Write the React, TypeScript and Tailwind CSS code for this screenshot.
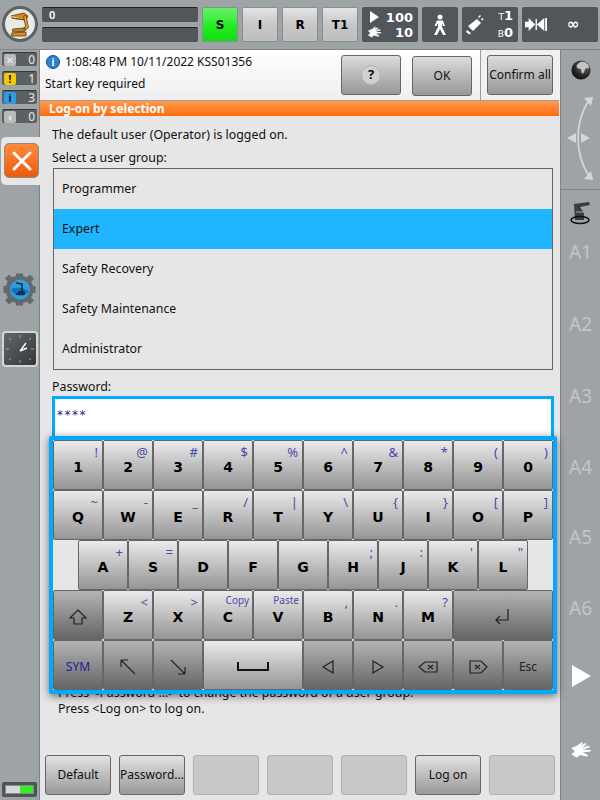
import React from "react";

const font = { fontFamily: '"Noto Sans", "DejaVu Sans", sans-serif' };
const dejavu = { fontFamily: '"DejaVu Sans", sans-serif' };

function RobotIcon() {
  return (
    <svg width="24" height="26" viewBox="0 0 24 26" fill="none" strokeLinecap="round" strokeLinejoin="round">
      <path d="M3 5 L16 2 L20 5 L18 9 M17 9 L10 8 L4 7 Z" fill="#d68a1e" stroke="#5a3c10" strokeWidth="0.8" />
      <path d="M17 6 L19 16 L15 19" stroke="#5a3c10" strokeWidth="3.4" />
      <path d="M17 6 L19 16 L15 19" stroke="#e09a28" strokeWidth="2" />
      <path d="M5 18 L17 17 L17 20 L5 21 Z" fill="#c47f1a" stroke="#5a3c10" strokeWidth="0.8" />
      <path d="M4 22 L18 21 L18 25 L4 25 Z" fill="#d98f22" stroke="#5a3c10" strokeWidth="0.8" />
    </svg>
  );
}

function ModeKey({ label, active }: { label: string; active?: boolean }) {
  return (
    <div
      className={
        "w-[36px] h-[35px] flex items-center justify-center text-[12px] font-bold text-black border border-[#8a8e90] " +
        (active
          ? "bg-gradient-to-b from-[#66f066] via-[#22ee22] to-[#11e011]"
          : "bg-gradient-to-b from-[#e4e4e4] via-[#c8c8c8] to-[#bdbdbd]")
      }
      style={dejavu}
    >
      {label}
    </div>
  );
}

function DarkBox({ className, children }: { className: string; children: React.ReactNode }) {
  return (
    <div className={"h-[35px] bg-[#50565a] rounded-[2px] text-white flex items-center " + className}>{children}</div>
  );
}

function HandIcon({ size = 18, fill = "white" }: { size?: number; fill?: string }) {
  return (
    <svg width={size} height={size * 0.8} viewBox="0 0 24 20" fill={fill}>
      <path d="M1 8 L8 5 L13 1 L14 3 L11 6 L17 2 L18 4 L13 8 L21 5 L22 7 L14 10 L23 10 L23 12 L14 13 L20 16 L19 18 L11 16 L7 19 L1 15 L5 12 Z" />
    </svg>
  );
}

function StatusRow({ n, bg, glyph }: { n: number; bg: string; glyph: string }) {
  return (
    <div className="w-[35px] h-[14px] mb-[5px] ml-[2px] bg-[#5a6064] border-t border-[#33383b] rounded-[2px] flex items-center justify-between pr-[2px] pl-[2px]">
      <div className={"w-[12px] h-[12px] rounded-[2px] flex items-center justify-center text-[10px] font-bold leading-none " + bg}>
        {glyph}
      </div>
      <span className="text-[12px] font-medium text-[#dcdcdc] leading-none" style={font}>
        {n}
      </span>
    </div>
  );
}

function Key({
  label,
  sub,
  dark,
  wide,
  subSmall,
  children,
}: {
  label?: string;
  sub?: string;
  dark?: boolean;
  wide?: boolean;
  subSmall?: boolean;
  children?: React.ReactNode;
}) {
  return (
    <div
      className={
        "relative h-[50px] flex items-center justify-center border-[1.5px] border-[#666] rounded-[2px] pt-[3px] " +
        (wide ? "w-[100px] " : "w-[50px] ") +
        (dark
          ? "bg-gradient-to-b from-[#b4b4b4] to-[#666666]"
          : "bg-gradient-to-b from-[#ebebeb] to-[#959595]")
      }
    >
      {label && (
        <span className="text-[14px] font-bold text-black leading-none" style={dejavu}>
          {label}
        </span>
      )}
      {children}
      {sub && (
        <span
          className={
            "absolute text-[#4a4aaa] leading-none " +
            (subSmall ? "right-[3px] top-[4px] text-[10px]" : "right-[4px] top-[5px] text-[13px]")
          }
          style={font}
        >
          {sub}
        </span>
      )}
    </div>
  );
}

function I({ children }: { children: React.ReactNode }) {
  return (
    <svg width="20" height="20" viewBox="0 0 20 20" fill="none" stroke="#222" strokeWidth="1.2">
      {children}
    </svg>
  );
}

const row1: [string, string][] = [["1", "!"], ["2", "@"], ["3", "#"], ["4", "$"], ["5", "%"], ["6", "^"], ["7", "&"], ["8", "*"], ["9", "("], ["0", ")"]];
const row2: [string, string][] = [["Q", "~"], ["W", "-"], ["E", "_"], ["R", "/"], ["T", "|"], ["Y", "\\"], ["U", "{"], ["I", "}"], ["O", "["], ["P", "]"]];
const row3: [string, string][] = [["A", "+"], ["S", "="], ["D", ""], ["F", ""], ["G", ""], ["H", ";"], ["J", ":"], ["K", "'"], ["L", '"']];

function Keyboard() {
  return (
    <div className="absolute left-[49px] top-[436px] w-[508px] h-[258px] bg-[#e6e6e6] border-4 border-[#00aaff] rounded-[2px] shadow-[0_2px_8px_rgba(0,0,0,0.55)] flex flex-col items-center">
      <div className="flex">{row1.map(([l, s]) => <Key key={l} label={l} sub={s} />)}</div>
      <div className="flex">{row2.map(([l, s]) => <Key key={l} label={l} sub={s} />)}</div>
      <div className="flex">{row3.map(([l, s]) => <Key key={l} label={l} sub={s} />)}</div>
      <div className="flex">
        <Key dark>
          <I><path d="M10 3 L18 11 L14 11 L14 17 L6 17 L6 11 L2 11 Z" /></I>
        </Key>
        <Key label="Z" sub="<" />
        <Key label="X" sub=">" />
        <Key label="C" sub="Copy" subSmall />
        <Key label="V" sub="Paste" subSmall />
        <Key label="B" sub="," />
        <Key label="N" sub="." />
        <Key label="M" sub="?" />
        <Key dark wide>
          <I><path d="M15 2 L15 13 L3 13 M7 9 L3 13 L7 17" /></I>
        </Key>
      </div>
      <div className="flex">
        <Key dark>
          <span className="text-[12px] text-[#22229a] leading-none" style={font}>SYM</span>
        </Key>
        <Key dark><I><path d="M3 3 L17 17 M3 3 L3 10 M3 3 L10 3" /></I></Key>
        <Key dark><I><path d="M3 3 L17 17 M17 17 L17 10 M17 17 L10 17" /></I></Key>
        <Key wide>
          <svg width="32" height="10" viewBox="0 0 32 10" fill="none" stroke="#111" strokeWidth="2"><path d="M1 0 L1 8 L31 8 L31 0" /></svg>
        </Key>
        <Key dark><I><path d="M15 4 L5 10 L15 16 Z" /></I></Key>
        <Key dark><I><path d="M5 4 L15 10 L5 16 Z" /></I></Key>
        <Key dark><I><path d="M7 5 L19 5 L19 15 L7 15 L1 10 Z M10 8 L15 12 M15 8 L10 12" /></I></Key>
        <Key dark><I><path d="M2 4 L13 4 L19 10 L13 16 L2 16 Z M7 8 L12 12 M12 8 L7 12" /></I></Key>
        <Key dark>
          <span className="text-[12px] text-[#222] leading-none" style={font}>Esc</span>
        </Key>
      </div>
    </div>
  );
}

function SoftKey({ label }: { label?: string }) {
  return label ? (
    <div className="w-[66px] h-[40px] shrink-0 flex items-center justify-center rounded-[3px] border border-[#666] bg-gradient-to-b from-[#e2e2e2] to-[#9a9a9a] text-[12px] text-[#111]">
      {label}
    </div>
  ) : (
    <div className="w-[66px] h-[40px] shrink-0 rounded-[3px] border border-[#b0b0b0] bg-[#c8c8c8]" />
  );
}

function HeadButton({ w, children }: { w: string; children: React.ReactNode }) {
  return (
    <div className={"h-[40px] flex items-center justify-center rounded-[3px] border border-[#666] bg-gradient-to-b from-[#dcdcdc] to-[#989898] text-[12px] text-[#111] " + w}>
      {children}
    </div>
  );
}

function Axis({ t, mt }: { t: string; mt: string }) {
  return (
    <div className={"text-[19px] leading-none text-[#c2c6c8] text-center " + mt} style={font}>
      {t}
    </div>
  );
}

export default function App() {
  return (
    <div className="w-[600px] h-[800px] relative overflow-hidden bg-[#9ea3a6] flex flex-col" style={font}>
      {/* top bar */}
      <div className="h-[50px] shrink-0 flex items-start border-b border-[#80858a]">
        <div className="w-[36px] h-[36px] mt-[6px] ml-[2px] rounded-full bg-[#e9e9e6] border-[3px] border-[#5c6266] flex items-center justify-center">
          <RobotIcon />
        </div>
        <div className="ml-[4px] mt-[7px] w-[156px] flex flex-col gap-[5px]">
          <div className="h-[15px] bg-[#50565a] border-t border-[#222] rounded-[2px] text-white text-[11px] font-semibold leading-[13px] pl-[7px]">0</div>
          <div className="h-[15px] bg-[#50565a] border-t border-[#222] rounded-[2px]" />
        </div>
        <div className="ml-[4px] mt-[7px] flex gap-[4px]">
          <ModeKey label="S" active />
          <ModeKey label="I" />
          <ModeKey label="R" />
          <ModeKey label="T1" />
          <DarkBox className="w-[56px] relative">
            <div className="w-full flex flex-col text-[13px] font-bold leading-[15px]" style={dejavu}>
              <div className="flex justify-between items-center pl-[8px] pr-[5px]">
                <div className="w-0 h-0 border-l-[9px] border-l-white border-y-[6px] border-y-transparent" />
                <span>100</span>
              </div>
              <div className="flex justify-between items-center pl-[5px] pr-[5px]">
                <HandIcon size={15} />
                <span>10</span>
              </div>
            </div>
          </DarkBox>
          <DarkBox className="w-[36px] justify-center">
            <svg width="14" height="22" viewBox="0 0 14 22" fill="white">
              <circle cx="7" cy="3" r="2.5" />
              <path d="M4 6.5 L10 6.5 L12 12 L10 12 L9 9 L9 13 L13 21 L10 21 L7 15 L4 21 L1 21 L5 13 L5 9 L3.5 12 L1.5 12 Z" />
            </svg>
          </DarkBox>
          <DarkBox className="w-[56px] justify-between pl-[4px] pr-[5px]">
            <svg width="18" height="20" viewBox="0 0 18 20" fill="white">
              <path d="M2 11 L11 4 L15 8 L7 16 Z" />
              <path d="M12 2 L14 0 L15 1 L13 3 Z M15 4 L17 3 L17.5 4.5 L16 5.5 Z M1 15 L5 18 L3.5 19.5 L0 17 Z" />
            </svg>
            <div className="flex flex-col items-end font-bold leading-[15px] text-[13px]" style={dejavu}>
              <span><span className="text-[9px] font-normal">T</span>1</span>
              <span><span className="text-[9px] font-normal">B</span>0</span>
            </div>
          </DarkBox>
          <DarkBox className="w-[76px] pl-[3px]">
            <svg width="22" height="13" viewBox="0 0 24 14" fill="white">
              <path d="M0 4 L4 4 L4 0 L11 7 L4 14 L4 10 L0 10 Z" />
              <path d="M11.5 1 L11.5 13 L13 13 L13 1 Z" />
              <path d="M13 7 L21 0 L21 14 Z" />
              <rect x="22" y="0" width="2" height="14" />
            </svg>
            <span className="ml-[20px] text-[15px] font-bold leading-none" style={dejavu}>∞</span>
          </DarkBox>
        </div>
      </div>

      {/* body */}
      <div className="flex-1 flex min-h-0">
        {/* left column */}
        <div className="w-[40px] shrink-0 flex flex-col pt-[2px] border-r border-[#7f8488]">
          <StatusRow n={0} bg="bg-[#b9b9b9] text-[#eee]" glyph="✕" />
          <StatusRow n={1} bg="bg-[#f5c800] text-black" glyph="!" />
          <StatusRow n={3} bg="bg-[#2f9be0] text-[#123]" glyph="i" />
          <StatusRow n={0} bg="bg-[#b9b9b9] text-[#eee]" glyph="‹" />
          <div className="mt-[9px] ml-[1px] w-[39px] h-[48px] bg-[#e6e6e6] rounded-l-[5px] pt-[6px] pl-[3px]">
            <div className="w-[35px] h-[35px] rounded-[5px] border border-[#8a8a8a] bg-gradient-to-b from-[#ff8a3a] to-[#ee5a08] flex items-center justify-center">
              <svg width="22" height="22" viewBox="0 0 22 22" stroke="white" strokeWidth="3" strokeLinecap="round"><path d="M3 3 L19 19 M19 3 L3 19" /></svg>
            </div>
          </div>
          <div className="mt-[88px] ml-[3px]">
            <svg width="33" height="33" viewBox="0 0 33 33">
              <g fill="#62686c">
                <circle cx="16.5" cy="16.5" r="14" />
                <rect x="13" y="0.5" width="7" height="5" />
                <rect x="13" y="27.5" width="7" height="5" />
                <rect x="0.5" y="13" width="5" height="7" />
                <rect x="27.5" y="13" width="5" height="7" />
                <rect x="3" y="3" width="7" height="6" transform="rotate(45 6.5 6)" />
                <rect x="23" y="3" width="7" height="6" transform="rotate(-45 26.5 6)" />
                <rect x="3" y="24" width="7" height="6" transform="rotate(-45 6.5 27)" />
                <rect x="23" y="24" width="7" height="6" transform="rotate(45 26.5 27)" />
              </g>
              <circle cx="17" cy="16.5" r="10" fill="#2f9ede" />
              <path d="M8 16 Q17 12 26 18 A10 10 0 0 1 8 16" fill="#1573b5" />
              <path d="M13 10 L19 11 L19 18 M13 21 L21 21 L21 19 L15 19" stroke="#123" strokeWidth="1.4" fill="none" />
            </svg>
          </div>
          <div className="mt-[25px] ml-[2px] w-[36px] h-[36px] rounded-[4px] border-2 border-[#d4d6d6] bg-gradient-to-br from-[#62686a] to-[#34383a] flex items-center justify-center">
            <svg width="30" height="30" viewBox="0 0 30 30" stroke="white" fill="none">
              <path d="M15 1 V4 M15 26 V29 M1 15 H4 M26 15 H29 M4 4 L6 6 M26 4 L24 6 M4 26 L6 24 M26 26 L24 24" strokeWidth="0.8" stroke="#bbb" />
              <path d="M15 17 L21 9 M15 17 L22 14" strokeWidth="1.4" />
            </svg>
          </div>
          <div className="mt-auto mb-[3px] ml-[2px] w-[35px] h-[15px] bg-[#4e5458] rounded-[2px] p-[3px]">
            <div className="h-full flex border border-[#888]">
              <div className="flex-1 bg-[#d8d8d8]" />
              <div className="flex-1 bg-[#33ee22]" />
            </div>
          </div>
        </div>

        {/* main */}
        <div className="flex-1 flex flex-col bg-[#e6e6e6] text-[12.35px] text-[#111] min-w-0">
          <div className="h-[50px] shrink-0 flex bg-gradient-to-b from-white to-[#eeeeee]">
            <div className="flex-1 flex flex-col pl-[5px] pt-[3px]">
              <div className="flex items-center gap-[5px] h-[18px]">
                <div className="w-[14px] h-[14px] ml-[1px] rounded-full bg-[#2b82d0] border border-[#15508c] flex items-center justify-center text-white text-[10px] font-bold leading-none">i</div>
                <span className="text-[12px]">1:08:48 PM 10/11/2022 KSS01356</span>
              </div>
              <div className="mt-[4px] text-[12px]">Start key required</div>
            </div>
            <div className="mt-[5px] mr-[11px]">
              <HeadButton w="w-[60px]">
                <div className="w-[20px] h-[20px] rounded-full bg-[#d0d0d0] border border-[#b0b0b0] flex items-center justify-center text-[13px] font-bold text-[#111]">?</div>
              </HeadButton>
            </div>
            <div className="mt-[6px] mr-[8px]">
              <HeadButton w="w-[60px]">OK</HeadButton>
            </div>
            <div className="w-[80px] border-l border-[#9a9a9a] pt-[5px] pl-[6px] bg-[#f0f0f0]">
              <HeadButton w="w-[66px]">Confirm all</HeadButton>
            </div>
          </div>
          <div className="h-[16px] shrink-0 mr-[1px] bg-gradient-to-b from-[#ff9a4a] to-[#ff6a00] border-t border-[#a0a0a0] text-white text-[12px] font-bold leading-[15px] pl-[9px]">
            Log-on by selection
          </div>
          <div className="flex-1 flex flex-col pl-[12px] pr-[6px] min-h-0">
            <div className="mt-[11px] leading-[16px]">The default user (Operator) is logged on.</div>
            <div className="mt-[7px] leading-[16px]">Select a user group:</div>
            <div className="mt-[2px] ml-[1px] w-[500px] border border-[#666] flex flex-col">
              <div className="h-[40px] flex items-center pl-[8px]">Programmer</div>
              <div className="h-[40px] flex items-center pl-[8px] bg-[#1fb6ff]">Expert</div>
              <div className="h-[40px] flex items-center pl-[8px]">Safety Recovery</div>
              <div className="h-[40px] flex items-center pl-[8px]">Safety Maintenance</div>
              <div className="h-[40px] flex items-center pl-[8px]">Administrator</div>
            </div>
            <div className="mt-[9px] leading-[16px]">Password:</div>
            <div className="mt-[1px] h-[60px] w-[502px] border-[3px] border-[#00aaff] bg-white pl-[2px] pt-[7px] text-[#22229a] text-[12px] tracking-[1.5px] shrink-0" style={dejavu}>****</div>
            <div className="mt-[229px] pl-[6px] leading-[16px] shrink-0">
              Press &lt;Password ...&gt; to change the password of a user group.
            </div>
            <div className="pl-[6px] leading-[16px] shrink-0">Press &lt;Log on&gt; to log on.</div>
            <div className="mt-auto mb-[5px] -ml-[7px] flex gap-[8px]">
              <SoftKey label="Default" />
              <SoftKey label="Password..." />
              <SoftKey />
              <SoftKey />
              <SoftKey />
              <SoftKey label="Log on" />
              <SoftKey />
            </div>
          </div>
        </div>

        {/* right column */}
        <div className="w-[40px] shrink-0 flex flex-col items-center border-l border-[#7f8488]">
          <div className="mt-[10px]">
            <svg width="20" height="20" viewBox="0 0 22 22">
              <defs>
                <radialGradient id="globe" cx="0.65" cy="0.3" r="0.8">
                  <stop offset="0" stopColor="#777" />
                  <stop offset="0.6" stopColor="#2a2a2a" />
                  <stop offset="1" stopColor="#0c0c0c" />
                </radialGradient>
              </defs>
              <circle cx="11" cy="11" r="10.5" fill="url(#globe)" />
              <path d="M9 3 Q14 0 19 5 L20 9 L16 9 L14 14 L12 15 L11 10 L7 9 L6 6 Z" fill="#c4c4c4" />
            </svg>
          </div>
          <div className="mt-[17px]">
            <svg width="32" height="84" viewBox="0 0 32 84" fill="#d4d6d7">
              <path d="M24 3 Q13 20 13 41 Q13 62 24 79" stroke="#d4d6d7" strokeWidth="1.8" fill="none" />
              <path d="M28 0 L19 1 L26 9 Z M28 83 L19 82 L26 74 Z" />
              <path d="M2 41 L11 36 L11 46 Z" />
              <path d="M25 41 L16 36 L16 46 Z" />
            </svg>
          </div>
          <div className="mt-[8px] w-full border-t border-[#7f8488]" />
          <div className="mt-[10px]">
            <svg width="24" height="26" viewBox="0 0 24 26">
              <path d="M5 4 L20 2 L21 5 L11 7 L15 13 L15 20 L6 20 Z" fill="#3a3e40" />
              <path d="M7 12 L19 12" stroke="#aaa" strokeWidth="1" />
              <ellipse cx="11" cy="20" rx="9" ry="3.5" fill="none" stroke="#111" strokeWidth="1.6" />
            </svg>
          </div>
          <Axis t="A1" mt="mt-[17px]" />
          <Axis t="A2" mt="mt-[53px]" />
          <Axis t="A3" mt="mt-[53px]" />
          <Axis t="A4" mt="mt-[52px]" />
          <Axis t="A5" mt="mt-[51px]" />
          <Axis t="A6" mt="mt-[52px]" />
          <div className="mt-[47px] ml-[1px] w-0 h-0 border-l-[19px] border-l-white border-y-[11px] border-y-transparent" />
          <div className="mt-[54px]">
            <HandIcon size={22} />
          </div>
        </div>
      </div>
      <Keyboard />
    </div>
  );
}
